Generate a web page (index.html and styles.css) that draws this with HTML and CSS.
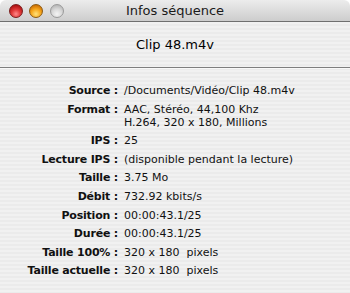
FILE: index.html
```html
<!DOCTYPE html>
<html lang="fr">
<head>
<meta charset="utf-8">
<title>Infos séquence</title>
<link rel="stylesheet" href="styles.css">
</head>
<body>
<div class="window">
  <div class="titlebar">
    <div class="lights">
      <span class="light red"></span>
      <span class="light orange"></span>
      <span class="light gray"></span>
    </div>
    <div class="title">Infos séquence</div>
  </div>
  <div class="content">
    <div class="header">Clip 48.m4v</div>
    <div class="sep"></div>
    <div class="info">
      <div class="lbl">Source&nbsp;:</div><div class="val">/Documents/Vidéo/Clip 48.m4v</div>
      <div class="lbl">Format&nbsp;:</div><div class="val">AAC, Stéréo, 44,100 Khz<br>H.264, 320 x 180, Millions</div>
      <div class="lbl">IPS&nbsp;:</div><div class="val">25</div>
      <div class="lbl">Lecture IPS&nbsp;:</div><div class="val">(disponible pendant la lecture)</div>
      <div class="lbl">Taille&nbsp;:</div><div class="val">3.75 Mo</div>
      <div class="lbl">Débit&nbsp;:</div><div class="val">732.92 kbits/s</div>
      <div class="lbl">Position&nbsp;:</div><div class="val">00:00:43.1/25</div>
      <div class="lbl">Durée&nbsp;:</div><div class="val">00:00:43.1/25</div>
      <div class="lbl">Taille 100%&nbsp;:</div><div class="val">320 x 180&nbsp; pixels</div>
      <div class="lbl">Taille actuelle&nbsp;:</div><div class="val">320 x 180&nbsp; pixels</div>
    </div>
  </div>
</div>
</body>
</html>
```
FILE: styles.css
```css
html, body {
  margin: 0;
  padding: 0;
  background: #ffffff;
}
body {
  font-family: "DejaVu Sans", "Liberation Sans", sans-serif;
  color: #000;
}
.window {
  width: 350px;
  height: 293px;
  display: flex;
  flex-direction: column;
  overflow: hidden;
}
.titlebar {
  height: 21px;
  border-bottom: 1px solid #6f6f6f;
  border-radius: 6px 6px 0 0;
  background: linear-gradient(#ececec 0%, #dedede 45%, #cdcdcd 100%);
  display: flex;
  align-items: center;
  position: relative;
}
.lights {
  display: flex;
  gap: 6.5px;
  padding-left: 8.5px;
  padding-top: 1px;
}
.light {
  width: 14px;
  height: 14px;
  border-radius: 50%;
  box-sizing: border-box;
}
.red {
  background: radial-gradient(circle at 50% 75%, #ff8a8a 0%, #e23b3b 40%, #a80d0d 85%);
  border: 1px solid #7a1c1c;
}
.orange {
  background: radial-gradient(circle at 50% 75%, #ffe27a 0%, #f6a71c 45%, #c96a00 85%);
  border: 1px solid #8c5a10;
}
.gray {
  background: radial-gradient(circle at 50% 75%, #f4f4f4 0%, #d9d9d9 45%, #b5b5b5 85%);
  border: 1px solid #9a9a9a;
}
.title {
  position: absolute;
  left: 0;
  right: 0;
  top: 0;
  line-height: 21px;
  text-align: center;
  font-size: 13px;
  color: #1a1a1a;
}
.content {
  flex: 1;
  background: repeating-linear-gradient(#f1f1f1 0px, #f1f1f1 2px, #ebebeb 2px, #ebebeb 4px);
}
.header {
  font-size: 13px;
  line-height: 16px;
  text-align: center;
  padding-top: 15px;
  padding-bottom: 14px;
}
.sep {
  height: 1px;
  background: #7e7e7e;
  border-bottom: 1px solid #f8f8f8;
}
.info {
  display: grid;
  grid-template-columns: 118px auto;
  column-gap: 6px;
  row-gap: 5.6px;
  padding-top: 15px;
  font-size: 11px;
  line-height: 13px;
  color: #111;
}
.lbl {
  font-weight: bold;
  text-align: right;
  white-space: nowrap;
  letter-spacing: -0.2px;
}
.val {
  white-space: nowrap;
}
```
